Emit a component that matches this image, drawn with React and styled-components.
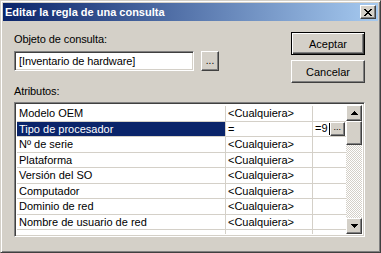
import React from "react";
import styled, { createGlobalStyle } from "styled-components";

const GlobalStyle = createGlobalStyle`
  html, body {
    margin: 0;
    padding: 0;
    background: #d4d0c8;
  }
  * {
    box-sizing: border-box;
  }
`;

const rows = [
  ["Modelo OEM", "<Cualquiera>", ""],
  ["Tipo de procesador", "=", "=9"],
  ["Nº de serie", "<Cualquiera>", ""],
  ["Plataforma", "<Cualquiera>", ""],
  ["Versión del SO", "<Cualquiera>", ""],
  ["Computador", "<Cualquiera>", ""],
  ["Dominio de red", "<Cualquiera>", ""],
  ["Nombre de usuario de red", "<Cualquiera>", ""],
  ["", "", ""],
];

const Window = styled.div`
  width: 381px;
  height: 253px;
  background: #d4d0c8;
  border-top: 1px solid #d4d0c8;
  border-left: 1px solid #d4d0c8;
  border-right: 1px solid #404040;
  border-bottom: 1px solid #404040;
  box-shadow: inset 1px 1px #ffffff, inset -1px -1px #808080;
  padding: 2px;
  display: flex;
  flex-direction: column;
  font-family: "Liberation Sans", Arial, sans-serif;
  font-size: 11px;
  color: #000;
  overflow: hidden;
`;

const TitleBar = styled.div`
  height: 18px;
  display: flex;
  align-items: center;
  justify-content: space-between;
  padding: 0 2px 0 2px;
  background: linear-gradient(to right, #0a246a, #a6caf0);
  color: #fff;
  font-weight: bold;
  font-family: "Liberation Sans", Arial, sans-serif;
  font-size: 11px;
`;

const Raised = styled.div`
  background: #d4d0c8;
  border-top: 1px solid #ffffff;
  border-left: 1px solid #ffffff;
  border-right: 1px solid #404040;
  border-bottom: 1px solid #404040;
  box-shadow: inset -1px -1px #808080, inset 1px 1px #d4d0c8;
  display: flex;
  align-items: center;
  justify-content: center;
`;

const CloseBtn = styled(Raised)`
  width: 16px;
  height: 14px;
`;

const Body = styled.div`
  flex: 1;
  padding: 11px 11px 0 11px;
  display: flex;
  flex-direction: column;
`;

const Top = styled.div`
  display: flex;
  justify-content: space-between;
`;

const Left = styled.div`
  display: flex;
  flex-direction: column;
  padding-top: 1px;
`;

const Label = styled.div`
  height: 13px;
  line-height: 13px;
  letter-spacing: -0.1px;
`;

const InputRow = styled.div`
  display: flex;
  gap: 7px;
  margin-top: 5px;
`;

const Sunken = styled.div`
  background: #fff;
  border-top: 1px solid #808080;
  border-left: 1px solid #808080;
  border-right: 1px solid #ffffff;
  border-bottom: 1px solid #ffffff;
  box-shadow: inset 1px 1px #404040, inset -1px -1px #d4d0c8;
`;

const TextBox = styled(Sunken)`
  width: 180px;
  height: 20px;
  padding: 3px 4px 0 4px;
  line-height: 13px;
  white-space: nowrap;
  letter-spacing: -0.1px;
`;

const DotsBtn = styled(Raised)`
  width: 18px;
  height: 20px;
  font-size: 10px;
  padding-bottom: 2px;
`;

const Buttons = styled.div`
  display: flex;
  flex-direction: column;
  gap: 5px;
  margin-right: 2px;
`;

const PushBtn = styled(Raised)`
  width: 74px;
  height: 23px;
  ${(p) =>
    p.$default &&
    `
    border: 1px solid #000;
    box-shadow: inset 1px 1px #fff, inset -1px -1px #404040, inset -2px -2px #808080;
  `}
`;

const AttrLabel = styled(Label)`
  margin-top: 2px;
`;

const Grid = styled(Sunken)`
  margin-top: 4px;
  margin-right: 2px;
  height: 135px;
  padding: 2px;
  display: flex;
  overflow: hidden;
`;

const Table = styled.div`
  flex: 1;
  overflow: hidden;
  padding-top: 1px;
`;

const Row = styled.div`
  display: grid;
  grid-template-columns: 209px 87px 1fr;
  height: 15.5px;
  border-bottom: 1px solid #d4d0c8;
`;

const Cell = styled.div`
  display: flex;
  align-items: center;
  padding-left: 2px;
  border-right: 1px solid #d4d0c8;
  white-space: nowrap;
  overflow: hidden;
  background: ${(p) => (p.$selected ? "#0a246a" : "#fff")};
  color: ${(p) => (p.$selected ? "#fff" : "#000")};
  &:last-child {
    border-right: none;
  }
`;

const EditCell = styled(Cell)`
  justify-content: space-between;
  padding-right: 1px;
`;

const Caret = styled.span`
  display: inline-block;
  width: 1px;
  height: 12px;
  background: #000;
  margin-left: 1px;
  vertical-align: middle;
`;

const SmallDots = styled(Raised)`
  width: 16px;
  height: 14px;
  font-size: 9px;
  padding-bottom: 3px;
`;

const ScrollBar = styled.div`
  width: 16px;
  display: flex;
  flex-direction: column;
`;

const ArrowBtn = styled(Raised)`
  width: 16px;
  height: 16px;
  flex: none;
`;

const Thumb = styled(Raised)`
  width: 16px;
  height: 24px;
  flex: none;
`;

const Track = styled.div`
  flex: 1;
  background-color: #ffffff;
  background-image: repeating-conic-gradient(#d4d0c8 0 25%, #ffffff 0 50%);
  background-size: 2px 2px;
`;

const Arrow = ({ down }) => (
  <svg width="7" height="4" viewBox="0 0 7 4">
    <path
      d={down ? "M0 0h7L3.5 4z" : "M3.5 0L7 4H0z"}
      fill="#000"
      shapeRendering="crispEdges"
    />
  </svg>
);

const CloseIcon = () => (
  <svg width="8" height="7" viewBox="0 0 8 7">
    <path
      d="M0 0h2l2 2.5L6 0h2L5 3.5 8 7H6L4 4.5 2 7H0l3-3.5z"
      fill="#000"
      shapeRendering="crispEdges"
    />
  </svg>
);

export default function App() {
  return (
    <>
      <GlobalStyle />
      <Window>
        <TitleBar>
          <span>Editar la regla de una consulta</span>
          <CloseBtn>
            <CloseIcon />
          </CloseBtn>
        </TitleBar>
        <Body>
          <Top>
            <Left>
              <Label>Objeto de consulta:</Label>
              <InputRow>
                <TextBox>[Inventario de hardware]</TextBox>
                <DotsBtn>...</DotsBtn>
              </InputRow>
            </Left>
            <Buttons>
              <PushBtn $default>Aceptar</PushBtn>
              <PushBtn>Cancelar</PushBtn>
            </Buttons>
          </Top>
          <AttrLabel>Atributos:</AttrLabel>
          <Grid>
            <Table>
              {rows.map(([name, op, val], i) => {
                const selected = i === 1;
                return (
                  <Row key={i}>
                    <Cell $selected={selected}>{name}</Cell>
                    <Cell>{op}</Cell>
                    {selected ? (
                      <EditCell>
                        <span>
                          {val}
                          <Caret />
                        </span>
                        <SmallDots>...</SmallDots>
                      </EditCell>
                    ) : (
                      <Cell>{val}</Cell>
                    )}
                  </Row>
                );
              })}
            </Table>
            <ScrollBar>
              <ArrowBtn>
                <Arrow />
              </ArrowBtn>
              <Thumb />
              <Track />
              <ArrowBtn>
                <Arrow down />
              </ArrowBtn>
            </ScrollBar>
          </Grid>
        </Body>
      </Window>
    </>
  );
}
